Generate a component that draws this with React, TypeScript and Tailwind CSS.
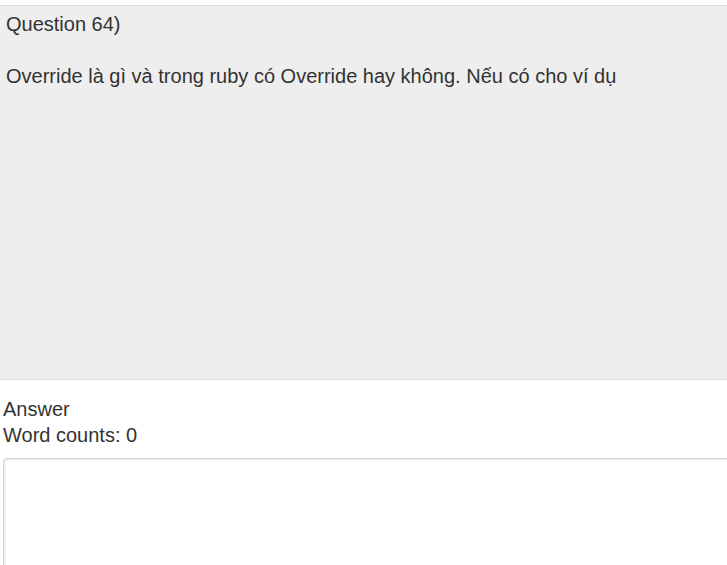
import React from "react";

export default function App() {
  return (
    <div
      className="w-[727px] h-[565px] overflow-hidden bg-white text-[#333] text-[20px] leading-[26px]"
      style={{ fontFamily: '"Liberation Sans", Arial, sans-serif' }}
    >
      <div className="h-[5px]" />
      <div className="w-[740px] h-[375px] bg-[#eeeeee] border-t border-b border-[#dddddd] pt-[5px] pl-[6px]">
        <div>Question 64)</div>
        <div className="h-[26px]" />
        <div>Override là gì và trong ruby có Override hay không. Nếu có cho ví dụ</div>
      </div>
      <div className="pl-[3px] pt-[16px]">
        <div>Answer</div>
        <div>Word counts: 0</div>
        <textarea
          className="mt-[10px] block w-[760px] h-[160px] rounded-[4px] border border-[#d6d6d6] shadow-[inset_1px_1px_2px_rgba(0,0,0,0.1)] outline-none resize-none"
        />
      </div>
    </div>
  );
}
